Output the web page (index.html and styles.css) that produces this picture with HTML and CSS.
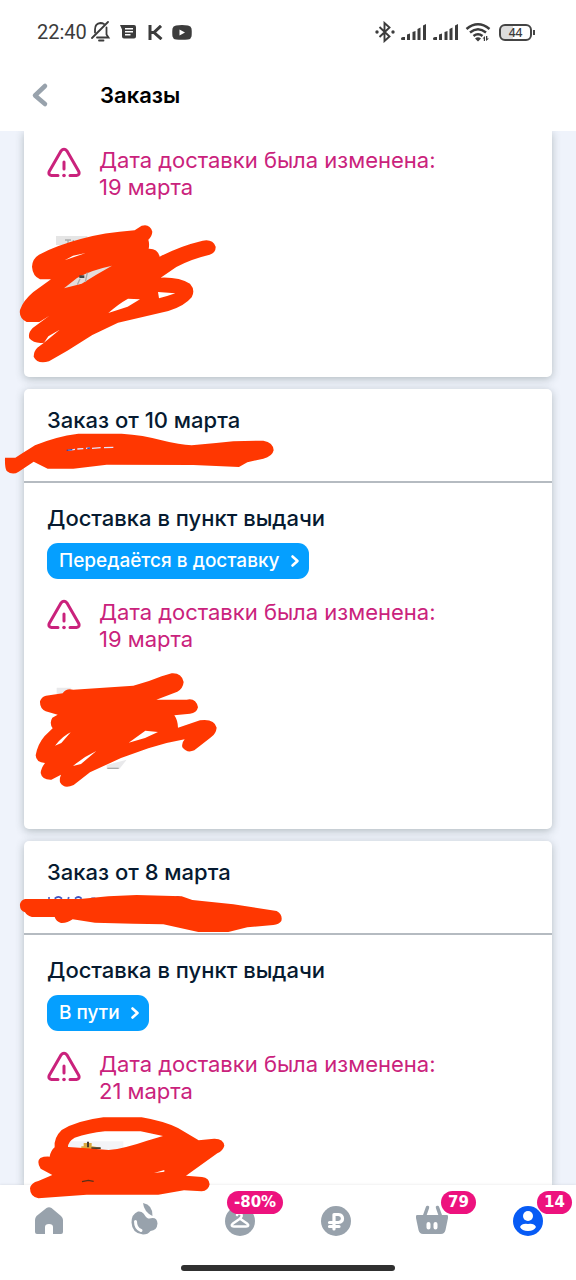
FILE: index.html
```html
<!DOCTYPE html>
<html lang="ru">
<head>
<meta charset="utf-8">
<meta name="viewport" content="width=device-width, initial-scale=1">
<title>Заказы</title>
<link rel="stylesheet" href="styles.css">
</head>
<body>
<svg class="defs" aria-hidden="true">
  <symbol id="warn" viewBox="0 0 34 32">
    <g fill="none" stroke="currentColor" stroke-width="3" stroke-linecap="round" stroke-linejoin="round">
      <path d="M11 28.500H4.500Q1 28 2.200 24.500L14 4Q17 .5 20 4L31.800 24.500Q33 28 29.500 28.500H23"/>
      <path d="M17 15v7"/>
    </g>
    <circle cx="17" cy="28.500" r="1.800" fill="currentColor"/>
  </symbol>
  <symbol id="chev" viewBox="0 0 10 14"><path d="M2.500 2.500L7.500 7l-5 4.500" fill="none" stroke="currentColor" stroke-width="2.600" stroke-linecap="round" stroke-linejoin="round"/></symbol>
  <symbol id="signal" viewBox="0 0 26 17"><path d="M0 14.500Q0 13 2 13H4V16H1Q0 16 0 15zM6 10.500l3-1V16H6zM11.500 8l3-1V16h-3zM16.500 5l3-1.500V16h-3zM22 1.500L25 0V16h-3z"/></symbol>
</svg>

<div class="status">
  <div class="status-side">
    <span class="clock">22:40</span>
    <svg width="20" height="22" viewBox="0 0 20 22"><g fill="none" stroke="currentColor" stroke-width="1.800" stroke-linecap="round"><path d="M1 17L17 1"/><path d="M4 11.500V8.500Q4 2.500 9.500 2Q11.500 2 13 3M15.500 6.500V13.500L17.500 16.500H6"/><path d="M8 19.500h4.500"/></g></svg>
    <svg class="gap-s" width="16" height="14" viewBox="0 0 16 14"><path fill-rule="evenodd" d="M0 0H14Q16 0 16 2V11.500Q16 13.500 14 13.500H4Q2 13.500 2 11.500V4.500zM5 3V4.500H13V3zM5 6V7.500H13V6zM5 9V10.500H10.500V9z"/></svg>
    <svg class="gap-m" width="15" height="15" viewBox="0 0 15 15"><path d="M2 0V15M13 .8L6 7.500L13.500 14.200M2 7.500H6" fill="none" stroke="currentColor" stroke-width="3"/></svg>
    <svg class="gap-s" width="20" height="15" viewBox="0 0 20 15"><path fill-rule="evenodd" d="M4 .5Q10-.3 16 .5Q19 .8 19.500 3.500Q20 7.500 19.500 11.500Q19 14 16 14.500Q10 15 4 14.500Q1 14 .5 11.500Q0 7.500 .5 3.500Q1 .8 4 .5zM7.500 4.500V10.500L13 7.500z"/></svg>
  </div>
  <div class="status-side">
    <svg width="20" height="22" viewBox="0 0 20 22"><path d="M4.500 6L14.500 15.500L9.500 20V2L14.500 6.500L4.500 16" fill="none" stroke="currentColor" stroke-width="1.900"/><circle cx="2" cy="11" r="1.700"/><circle cx="18" cy="11" r="1.700"/></svg>
    <svg class="gap-xs" width="26" height="17"><use href="#signal"/></svg>
    <svg class="gap-xs" width="26" height="17"><use href="#signal"/></svg>
    <svg class="gap-xs" width="26" height="20" viewBox="0 0 26 20"><g fill="none" stroke="currentColor" stroke-width="2.500"><path d="M1.500 7Q13-2.500 24.500 7"/><path d="M5 10.500Q13 4 21 10.500"/><path d="M8.500 14Q13 10.500 17.500 14"/></g><path d="M10 16.500Q13 14 16 16.500L13 19.500zM17.500 16.500L20 14V19H18.800V16.500zM21 14H22.300V16.500H24L21 19z"/></svg>
    <span class="battery">44</span>
  </div>
</div>

<header class="topbar">
  <button class="back" type="button" aria-label="Назад"><svg width="18" height="26" viewBox="0 0 18 26"><path d="M14 4L4 13.500L14 22" fill="none" stroke="currentColor" stroke-width="4.500" stroke-linecap="round" stroke-linejoin="round"/></svg></button>
  <h1>Заказы</h1>
</header>

<main class="orders">
  <article class="card card-first">
    <div class="card-body card-body-first">
      <p class="notice"><svg width="34" height="32"><use href="#warn"/></svg><span>Дата доставки была изменена:<br>19 марта</span></p>
      <div class="goods">
        <svg class="scribble" viewBox="0 225 864 480">
          <path fill="#e5e5e5" d="M168 318H262V345H168z"/>
          <path d="M195 330h18m-9 0v14m16-14v14m18-14v10" stroke="#aaa" stroke-width="4"/>
          <path fill="#ff3701" fill-rule="evenodd" d="M117 374Q170 346 242 327Q310 308 404 301L425 287Q450 280 457 305Q456 319 445 329Q449 341 446 356Q473 355 479 380Q540 348 608 332Q638 326 647 350Q648 368 629 374Q570 388 529 411L482 443Q538 441 570 461Q587 480 575 502Q553 529 505 543L354 578L277 615L202 662L147 694Q112 704 101 680Q102 662 112 653L132 638Q102 642 88 625Q83 609 98 594L148 557L118 576H80Q56 565 60 540Q69 512 100 486L153 448H120Q98 438 96 410Q97 386 117 374zM194 391L257 369L219 377zM325 549L383 530L420 508L384 506Q355 522 325 549zM474 486L477 505Q501 499 526 490zM132 638L179 599L145 619z"/>
          <path fill="#e4dcda" d="M192 475L245 461L289 434L336 407Q270 421 231 444z"/><path fill="#444" d="M238 436h15v8h-15z"/><path d="M262 428l-6 28M240 446l-8 18" stroke="#aaa" stroke-width="4"/>
        </svg>
      </div>
    </div>
  </article>

  <article class="card">
    <div class="card-head">
      <h2>Заказ от 10 марта</h2>
      <div class="number">
        <svg class="strike" viewBox="0 150 990 150">
          <path fill="#ff3701" d="M15 233H46Q80 212 105 196Q165 170 235 161H365Q430 165 485 181Q540 195 575 196Q635 191 700 184L790 182Q820 187 821 211Q817 230 790 236L742 247L717 261L580 255L320 254L220 266H143L101 245L56 275Q38 287 20 273Q14 263 15 233z"/>
          <path d="M204 211L225 208M232 207L250 206M258 205L270 204M276 205L302 203M312 203L340 202" stroke="#e4e5ff" stroke-width="4"/><path d="M200 211L217 209M262 205L270 204" stroke="#3342ac" stroke-width="4"/>
        </svg>
      </div>
    </div>
    <div class="card-body">
      <h3>Доставка в пункт выдачи</h3>
      <button class="state" type="button">Передаётся в доставку<svg width="10" height="14"><use href="#chev"/></svg></button>
      <p class="notice"><svg width="34" height="32"><use href="#warn"/></svg><span>Дата доставки была изменена:<br>19 марта</span></p>
      <div class="goods">
        <svg class="scribble" viewBox="0 -6 864 480">
          <path fill="#e9e9eb" d="M170 86H215L195 105H170zM320 318L380 302L358 330H320z"/><path d="M322 328H356" stroke="#aaa" stroke-width="4"/>
          <path fill="#ff3701" fill-rule="evenodd" d="M138 110L188 103Q199 86 220 92L400 80Q445 69 485 52L515 43Q545 41 551 69Q549 89 532 98L469 122H560Q588 116 594 145Q590 163 570 164L523 169Q533 183 534 206L600 184Q643 178 650 206Q648 224 633 235L583 274Q561 284 547 265Q544 252 554 241Q500 250 445 268L363 297L270 340L221 378Q192 392 180 370Q178 359 183 347L154 362Q126 363 122 342Q123 328 135 312Q108 311 107 289Q113 255 134 231L158 208Q147 192 157 176L173 167L137 157Q119 149 120 127Q124 114 138 110zM165 260L184 252L212 220Q188 231 165 260zM386 251L435 237L474 219L436 215zM219 321L243 315L289 276Q250 294 219 321z"/>
        </svg>
      </div>
    </div>
  </article>

  <article class="card card-last">
    <div class="card-head">
      <h2>Заказ от 8 марта</h2>
      <div class="number">
        <svg class="strike" viewBox="0 66 990 150">
          <path d="M144 114h6M164 116q11-11 22 0M203 116l5-4M225 116q10-10 20 0M274 115h12M525 115q8-9 16 0" fill="none" stroke="#4054c0" stroke-width="5"/>
          <path fill="#ff3701" d="M75 117H240Q325 107 410 105L545 109L577 120L700 133L830 153Q849 164 844 183Q837 194 820 195L742 202L685 216H595L490 193L400 191L285 188L218 178Q202 190 183 189Q168 184 164 171H96Q82 168 75 157Q58 151 60 132Q63 120 75 117z"/>
        </svg>
      </div>
    </div>
    <div class="card-body card-body-last">
      <h3>Доставка в пункт выдачи</h3>
      <button class="state" type="button">В пути<svg width="10" height="14"><use href="#chev"/></svg></button>
      <p class="notice"><svg width="34" height="32"><use href="#warn"/></svg><span>Дата доставки была изменена:<br>21 марта</span></p>
      <div class="goods goods-cut">
        <svg class="scribble" viewBox="0 207 864 480">
          <path fill="#f3f4f7" d="M205 304H370V330H205z"/><path fill="#dba940" d="M251 309h24v10h-24zM244 319h34l24 4v5h-58z"/><path fill="#443c30" d="M261 305h6v17h-6zM274 322h28v5h-28z"/>
          <path fill="#ff3701" fill-rule="evenodd" d="M310 232H425Q490 243 534 264L596 301L642 296Q670 295 673 317Q669 332 652 340L558 407L606 411Q628 414 629 433Q625 453 605 454L552 451L475 464H260L115 475Q90 470 90 445Q93 428 115 423L157 405L122 386Q108 365 121 354Q132 349 149 350Q152 332 164 322Q161 293 185 270Q231 242 310 232zM204 321L260 325L326 330Q375 325 441 302L489 288L422 274H315Q265 279 224 293Q204 305 204 321zM462 399L493 395V390z"/><path d="M246 425l19-4 16 3" fill="none" stroke="#593018" stroke-width="4"/>
        </svg>
      </div>
    </div>
  </article>
</main>

<footer class="dock">
  <nav class="tabs" aria-label="Разделы">
    <a class="tab" href="#home" aria-label="Главная"><svg width="32" height="32" viewBox="0 0 32 32"><path d="M4.500 11L14.500 3Q17 1.500 19.500 3L29 11Q31 13 31 15V27Q31 29 29 29H21V22Q21 19 17 19T13 22V29H5Q3 29 3 27V15Q3 13 4.500 11z"/></svg></a>
    <a class="tab" href="#fresh" aria-label="Свежее"><svg width="32" height="36" viewBox="0 0 32 36"><path d="M15 2Q25 4 24.500 15Q16 11 15 2z"/><path d="M15.500 12.500C17 14.500 19 18 21.500 17.500Q29 15.500 29.500 22.500Q29 29.500 22.500 30Q20 33.500 15 33.500Q4 32.500 3.500 21.500Q3.500 13 10 10.500Q13.500 10 15.500 12.500z"/><path d="M7.500 20.500Q7.500 27.500 13 29.500" fill="none" stroke="#fff" stroke-width="3" stroke-linecap="round"/></svg></a>
    <a class="tab" href="#fashion" aria-label="Одежда"><span class="icon"><svg width="32" height="32" viewBox="0 0 32 32"><circle cx="16" cy="16" r="15"/><path d="M13 10Q14 7 17 9Q19 11 15.500 14L9 18.500Q6 21 10 21.500H22Q26 21 23 18.500L16.500 14" fill="none" stroke="#fff" stroke-width="2.500" stroke-linecap="round"/></svg><span class="badge">-80%</span></span></a>
    <a class="tab" href="#money" aria-label="Финансы"><svg width="32" height="32" viewBox="0 0 32 32"><circle cx="16" cy="16" r="15"/><path d="M14 24V9.500H18.500Q22.500 10 22.500 13.500T18.500 17.500H9.500M9.500 21.500H19" fill="none" stroke="#fff" stroke-width="3.200" stroke-linecap="round" stroke-linejoin="round"/></svg></a>
    <a class="tab" href="#cart" aria-label="Корзина"><span class="icon"><svg width="32" height="32" viewBox="0 0 32 32"><path d="M1 10H31Q32.500 10 32 13L29.500 25Q28.500 29 25 29H7Q3.500 29 2.500 25L0 13Q-.5 10 1 10z"/><path d="M8.500 11L11.500 2.500M24.500 11L21.500 2.500" stroke="currentColor" stroke-width="3.500" stroke-linecap="round"/><path d="M12.500 19v3.500M19.500 19v3.500" stroke="#fff" stroke-width="4" stroke-linecap="round"/></svg><span class="badge">79</span></span></a>
    <a class="tab tab-active" href="#profile" aria-label="Профиль"><span class="icon"><svg width="32" height="32" viewBox="0 0 32 32"><circle cx="16" cy="16" r="15"/><circle cx="16" cy="11" r="5" fill="#fff"/><path d="M8 22Q10 18 16 19Q22 18 24 22Q22 26 16 26T8 22z" fill="#fff"/></svg><span class="badge">14</span></span></a>
  </nav>
  <div class="handle"></div>
</footer>
</body>
</html>
```

FILE: styles.css
```css
* { box-sizing: border-box; }
body {
  margin: 0;
  min-height: 100vh;
  display: flex;
  flex-direction: column;
  background: #fff;
  color: #061a30;
  font-family: Inter, "Noto Sans", sans-serif;
}
svg { display: block; fill: currentColor; flex: none; }
h1, h2, h3, p { margin: 0; }
button { border: 0; font: inherit; cursor: pointer; }
.defs { position: absolute; width: 0; height: 0; }

.status {
  display: flex;
  justify-content: space-between;
  align-items: center;
  height: 64px;
  padding: 0 44px 0 37px;
  color: #3c3c3c;
}
.status-side { display: flex; align-items: center; }
.clock { font: 400 20px/24px Roboto, sans-serif; margin-right: 4px; }
.gap-xs { margin-left: 6px; }
.gap-s { margin-left: 9px; }
.gap-m { margin-left: 12px; }
.battery {
  position: relative;
  width: 33px;
  margin-left: 8px;
  border: 2px solid #444;
  border-radius: 6px;
  background: linear-gradient(90deg, #ddd 40%, #fff 40%);
  font: 500 12px/13px "Noto Sans", sans-serif;
  text-align: center;
}
.battery::after {
  content: "";
  position: absolute;
  right: -5px;
  top: 4px;
  width: 2px;
  height: 5px;
  background: #444;
}

.topbar { display: flex; align-items: center; height: 67px; padding: 0 31px 5px; }
.back { padding: 0; background: none; color: #98a2ac; }
.topbar h1 { margin-left: 51px; font-size: 22px; font-weight: 600; line-height: 30px; color: #000; }

.orders {
  flex: 1;
  display: flex;
  flex-direction: column;
  gap: 12px;
  padding: 0 24px;
  background: #eff3fb;
}
.card { border-radius: 5px; background: #fff; box-shadow: 0 2px 8px rgba(40, 60, 60, .3); }
.card-first { border-radius: 0 0 5px 5px; clip-path: inset(0 -24px -12px); }
.card-last { flex: 1; border-radius: 5px 5px 0 0; }
.card-head { padding: 16px 23px 22px; border-bottom: 2px solid #b5bbc1; }
h2, h3 { font-size: 22px; font-weight: 500; line-height: 30px; }
.number { position: relative; height: 24px; }
.strike { position: absolute; left: -47px; top: -5px; width: 330px; height: 50px; pointer-events: none; }
.card-body { padding: 20px 23px 58px; }
.card-body-first { padding-top: 16px; }
.card-body-last { padding-bottom: 0; }
.state {
  display: flex;
  align-items: center;
  gap: 10px;
  height: 36px;
  margin: 10px 0 20px;
  padding: 0 9px 1px 12px;
  border-radius: 11px;
  background: #059fff;
  color: #fff;
  font-size: 19px;
  font-weight: 500;
}
.notice { display: flex; gap: 18px; color: #ca227c; font-size: 22px; line-height: 27px; }
.goods { position: relative; height: 84px; margin-top: 34px; }
.goods-cut { height: 46px; }
.scribble { position: absolute; z-index: 2; left: -47px; top: -30px; width: 288px; height: 160px; pointer-events: none; }

.dock { position: relative; padding: 16px 0 9px; background: #fff; box-shadow: 0 -1px 2px rgba(0, 0, 0, .06); }
.tabs { display: grid; grid-template-columns: repeat(6, 1fr); height: 64px; }
.tab { display: flex; justify-content: center; align-items: flex-start; padding-top: 4px; color: #98a2ac; }
.tab:nth-child(2) { padding-top: 0; }
.tab-active { color: #075bf5; }
.icon { position: relative; }
.badge {
  position: absolute;
  left: 25px;
  top: -14px;
  padding: 0 7px;
  border-radius: 12px;
  background: #ed127e;
  color: #fff;
  font: 700 15px/23px "DejaVu Sans", sans-serif;
}
.tab:nth-child(3) .badge { left: 3px; }
.handle { width: 37%; height: 6px; margin: 0 auto; border-radius: 3px; background: #303030; }
```
